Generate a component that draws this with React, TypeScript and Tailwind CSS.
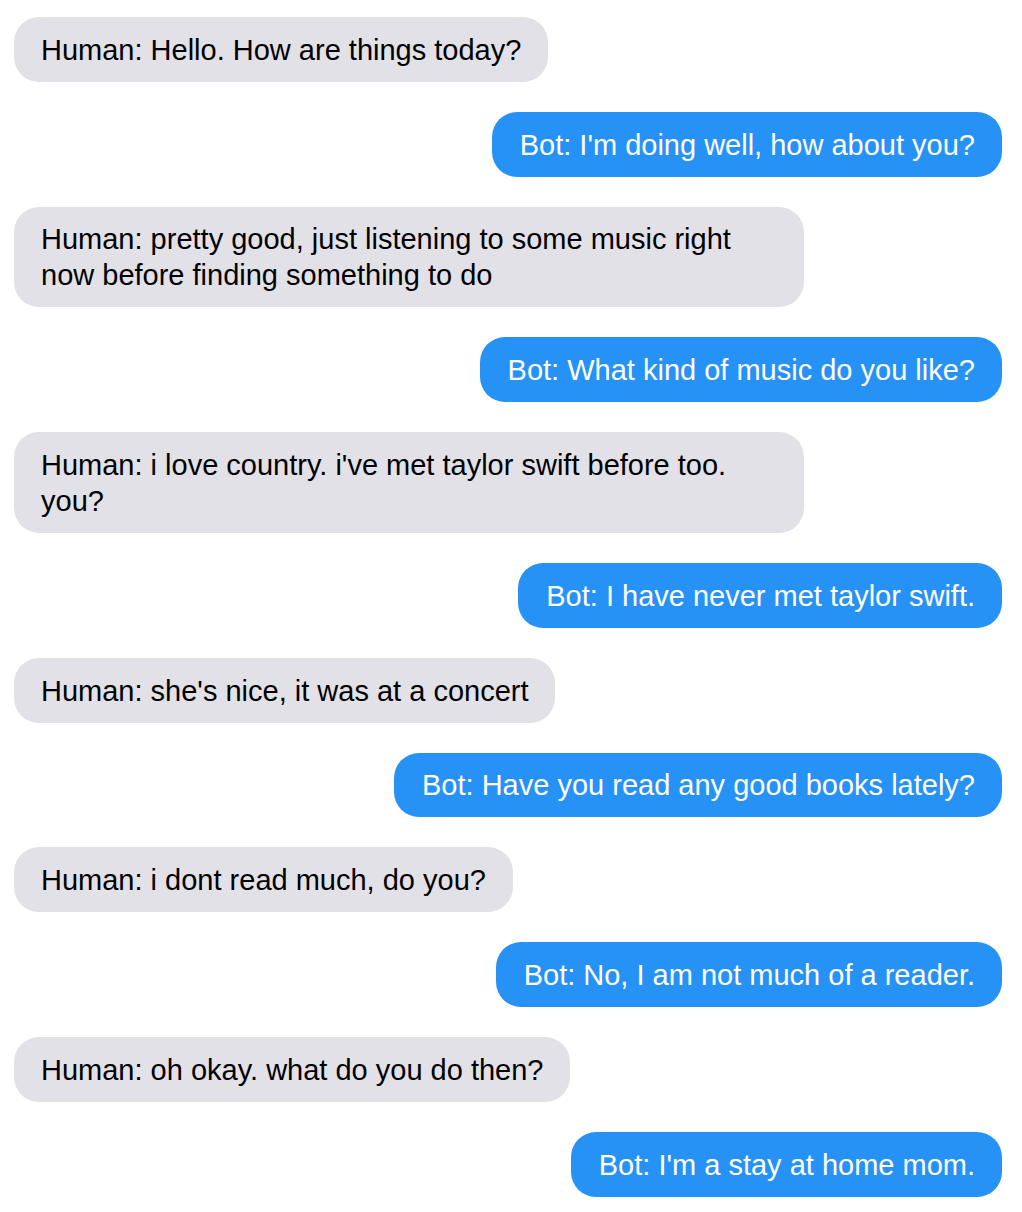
import React from "react";

const messages: { from: "human" | "bot"; text: string }[] = [
  { from: "human", text: "Human: Hello. How are things today?" },
  { from: "bot", text: "Bot: I'm doing well, how about you?" },
  { from: "human", text: "Human: pretty good, just listening to some music right now before finding something to do" },
  { from: "bot", text: "Bot: What kind of music do you like?" },
  { from: "human", text: "Human: i love country. i've met taylor swift before too. you?" },
  { from: "bot", text: "Bot: I have never met taylor swift." },
  { from: "human", text: "Human: she's nice, it was at a concert" },
  { from: "bot", text: "Bot: Have you read any good books lately?" },
  { from: "human", text: "Human: i dont read much, do you?" },
  { from: "bot", text: "Bot: No, I am not much of a reader." },
  { from: "human", text: "Human: oh okay. what do you do then?" },
  { from: "bot", text: "Bot: I'm a stay at home mom." },
];

export default function App() {
  return (
    <div
      className="min-h-[1212px] bg-white pt-[17px] pl-[14px] pr-[20px] pb-[14px] flex flex-col gap-[30px]"
      style={{ fontFamily: '"Liberation Sans", Arial, Helvetica, sans-serif' }}
    >
      {messages.map((m, i) => (
        <div key={i} className={m.from === "bot" ? "flex justify-end" : "flex justify-start"}>
          <div
            className={
              m.from === "bot"
                ? "max-w-[80%] rounded-[25px] bg-[#2792f6] text-white text-[29px] leading-[36px] pl-[28px] pr-[27px] pt-[14.8px] pb-[14px]"
                : "max-w-[80%] rounded-[25px] bg-[#e2e1e7] text-black text-[29px] leading-[36px] pl-[27px] pr-[27px] pt-[14.8px] pb-[14px]"
            }
          >
            {m.text}
          </div>
        </div>
      ))}
    </div>
  );
}
